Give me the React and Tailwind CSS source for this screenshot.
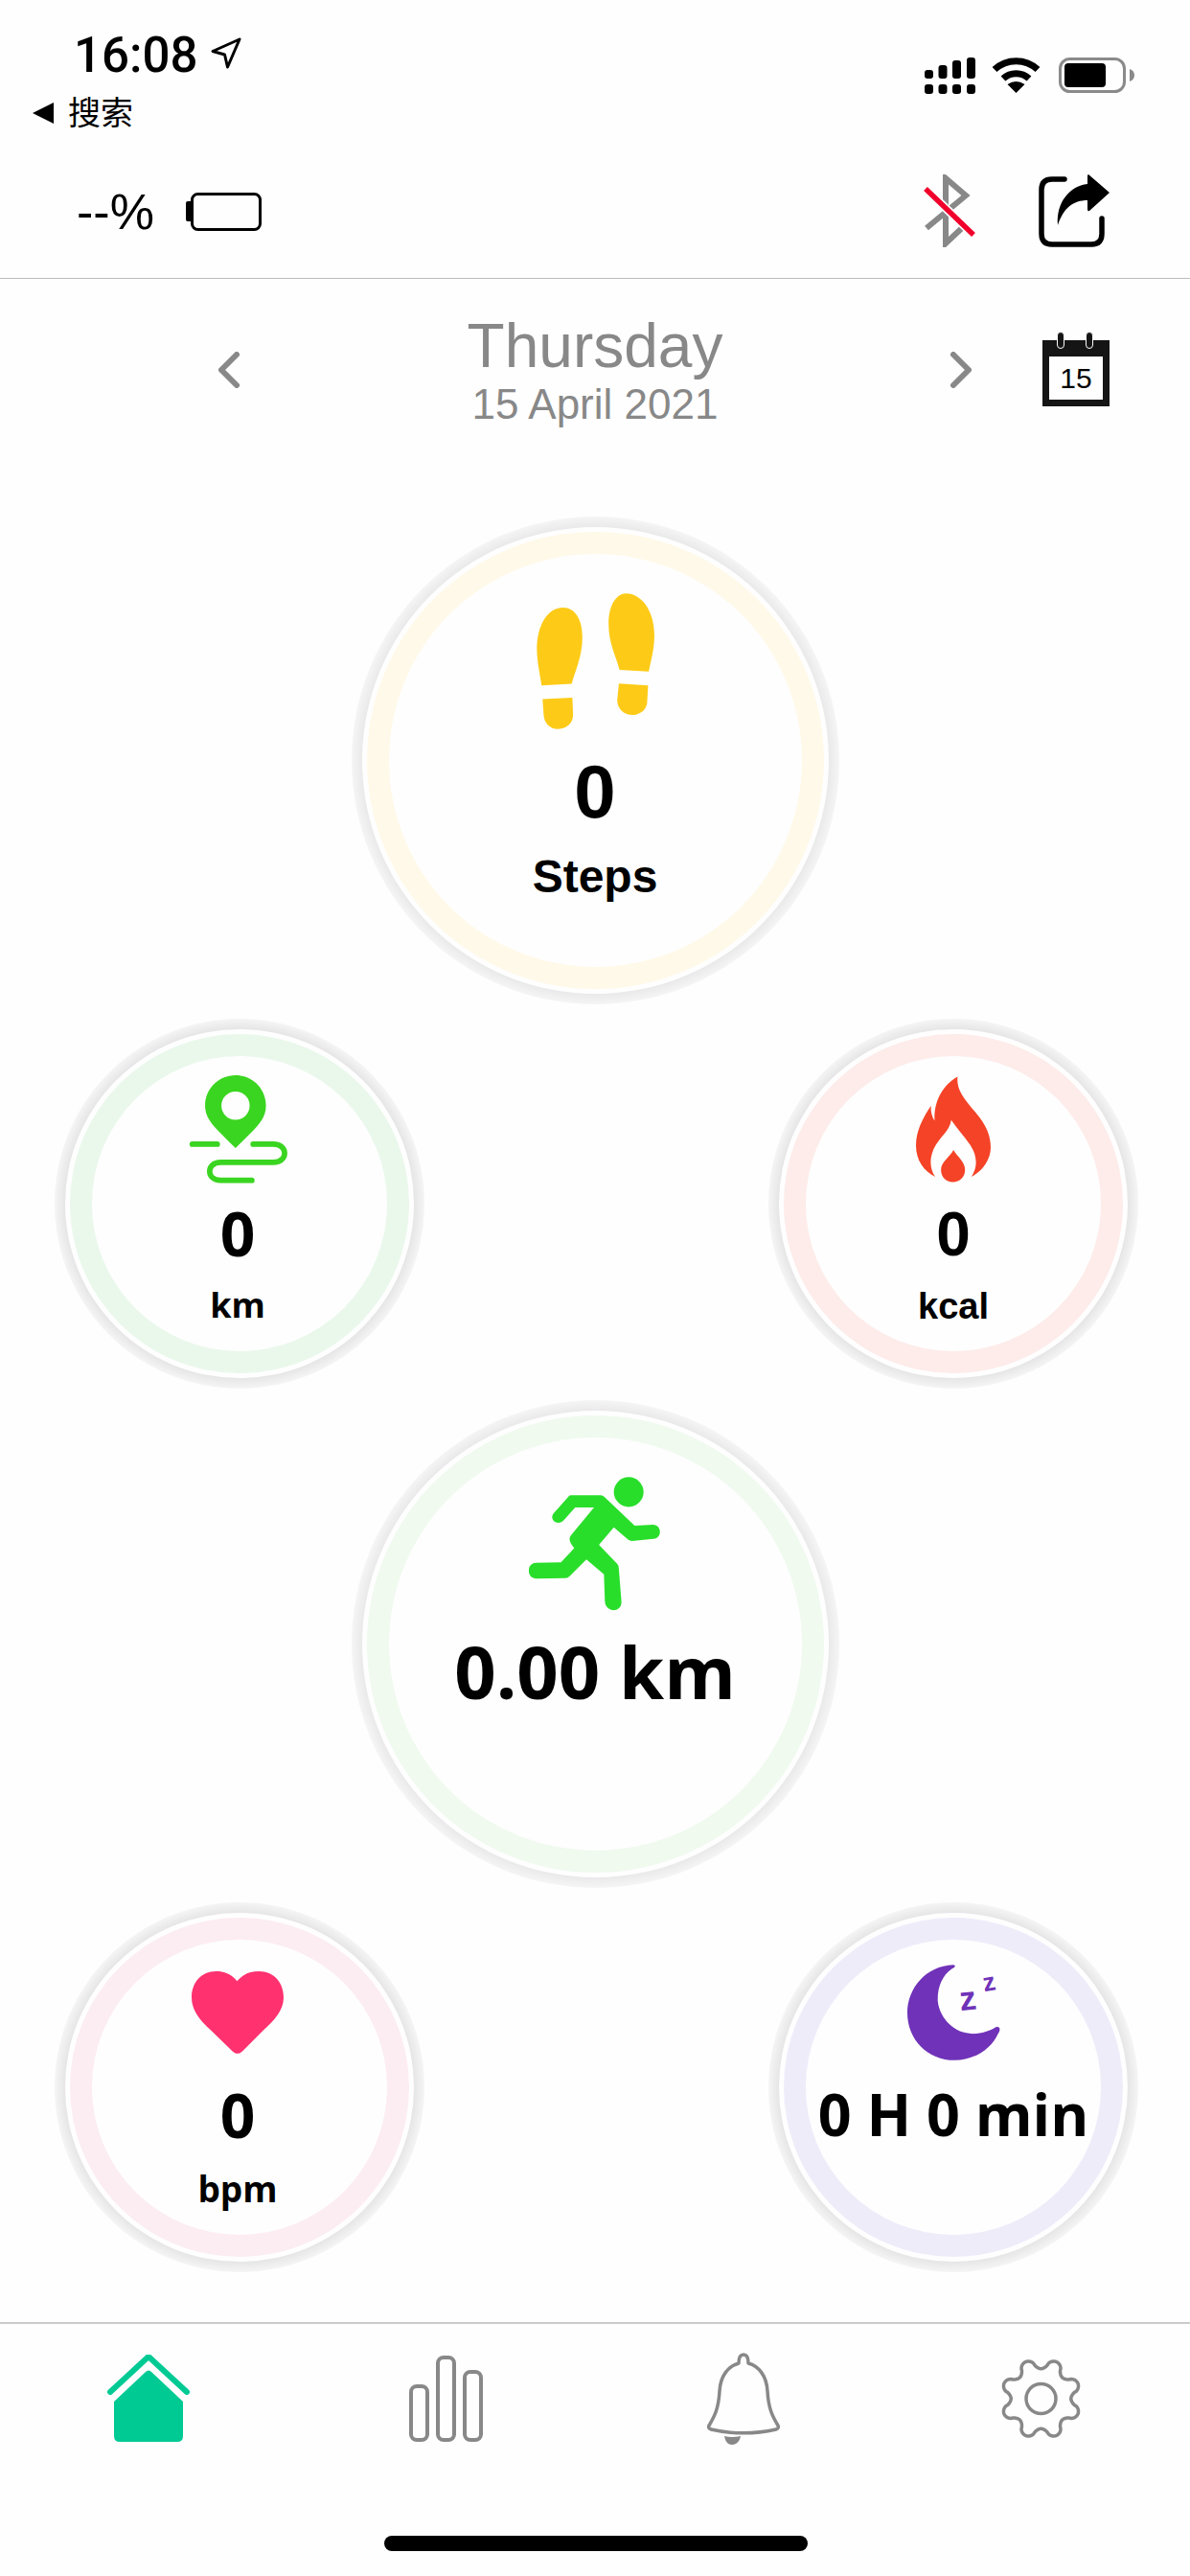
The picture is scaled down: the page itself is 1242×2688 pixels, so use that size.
import React from "react";

const gearPath = (() => {
  const pts = [];
  for (let i = 0; i < 240; i++) {
    const t = (i / 240) * Math.PI * 2;
    const c = Math.cos(8 * (t - Math.PI / 8));
    const s = Math.sign(c) * Math.pow(Math.abs(c), 0.65);
    const r = 36.5 + 5.2 * s;
    pts.push(`${(42.5 + r * Math.cos(t)).toFixed(2)} ${(43 + r * Math.sin(t)).toFixed(2)}`);
  }
  return "M" + pts.join("L") + "Z";
})();

function Ring({ big, ring, children, inner = "" }) {
  return (
    <div
      className={`rounded-full bg-[radial-gradient(closest-side,#e5e5e6_94%,#f5f5f6_100%)] p-[11px] ${big ? "h-[509px] w-[509px]" : "h-[386px] w-[386px]"}`}
    >
      <div className="h-full w-full rounded-full bg-[#fefefe] p-[5px]">
        <div className={`h-full w-full rounded-full p-[23px] ${ring}`}>
          <div className={`flex h-full w-full flex-col items-center rounded-full bg-[#fefefe] ${inner}`}>{children}</div>
        </div>
      </div>
    </div>
  );
}

const Feet = () => (
  <svg width="123" height="142" viewBox="610 288 355 410" fill="#fdcb17" className="mt-[41px]">
    <path d="M690 331C640 331 610 390 611 460C612 500 620 530 625 566L716 561C725 525 748 480 748 420C748 365 725 331 690 331Z" />
    <path d="M628 607L718 603L720 655C720 680 700 697 675 697C650 697 632 680 631 650Z" />
    <path d="M880 289C925 289 965 340 965 415C965 455 955 490 948 524L860 519C850 480 827 440 827 380C827 325 850 289 880 289Z" />
    <path d="M858 560L946 566L943 620C940 640 920 655 898 655C872 655 853 635 853 610Z" />
  </svg>
);

const Pin = () => (
  <svg width="103" height="113" viewBox="472 210 306 338" className="mt-[20px]">
    <path fill="#3ad520" fillRule="evenodd" d="M617 210C670 210 712 252 712 305C712 350 680 375 617 437C555 375 522 350 522 305C522 252 564 210 617 210ZM617 261A44 44 0 1 0 617 349A44 44 0 1 0 617 261Z" />
    <path fill="none" stroke="#3ad520" strokeWidth="17" strokeLinecap="round" d="M482 425H560M672 425H735C782 425 782 482 735 482H570C525 482 525 538 570 538H668" />
  </svg>
);

const Flame = () => (
  <svg width="78" height="111" viewBox="495 215 233 328" fill="#f54327" className="mt-[21px]">
    <path d="M625 215C620 250 640 280 680 325C715 365 728 400 728 435C728 475 700 510 668 527C680 505 685 490 680 465C675 430 640 400 605 350C600 385 570 400 550 440C535 475 540 505 555 527C520 510 495 475 495 430C495 385 515 345 542 305C540 325 545 340 553 352C550 290 580 240 625 215Z" />
    <path d="M612 443C625 465 648 480 648 505C648 528 630 543 610 543C590 543 573 528 573 505C573 480 598 468 612 443Z" />
  </svg>
);

const Runner = () => (
  <svg width="138" height="140" viewBox="588 262 400 406" className="mt-[41px]">
    <circle cx="890" cy="308" r="45" fill="#28de2a" />
    <path
      fill="#28de2a"
      d="M715 318H805Q812 318 818 324L908 410L962 407C990 405 993 448 965 450L900 456Q893 456 888 452L845 415L800 468L855 525Q860 530 860 538L868 640C869 674 820 674 818 640L815 557L762 512L712 562Q706 569 698 569L610 570C580 570 580 522 610 522L685 521L725 478L716 465Q706 450 716 438L785 355H728L695 392C675 415 645 390 665 370L705 325Q710 318 715 318Z"
    />
  </svg>
);

const Heart = () => (
  <svg width="96" height="86" viewBox="485 255 283 253" fill="#ff316f" className="mt-[33px]">
    <path d="M625 285C605 262 585 255 560 255C515 255 485 290 485 335C485 375 510 405 545 437L610 500C620 510 632 510 642 500L705 437C740 405 768 375 768 335C768 290 738 255 692 255C665 255 645 262 625 285Z" />
  </svg>
);

const Moon = () => (
  <svg width="97" height="100" viewBox="468 232 287 295" className="mt-[26px]">
    <path fill="#6f32b8" d="M610 232C620 235 615 240 605 245C575 265 560 305 562 345C568 400 615 445 670 445C695 445 725 435 740 425C755 420 757 432 748 445C725 495 670 527 615 527C530 527 468 462 468 380C468 305 525 235 610 232Z" />
    <text x="629" y="372" fontSize="104" fontWeight="700" fill="#6f32b8" fontFamily="Liberation Sans, sans-serif" transform="rotate(-6 655 345)">z</text>
    <text x="702" y="312" fontSize="78" fontWeight="700" fill="#6f32b8" fontFamily="Liberation Sans, sans-serif" transform="rotate(-10 724 292)">z</text>
  </svg>
);

export default function App() {
  return (
    <div className="flex h-[2688px] w-[1242px] flex-col overflow-hidden bg-[#fefefe] font-['Liberation_Sans','Noto_Sans_CJK_SC',sans-serif] text-black">
      {/* status + header */}
      <div className="h-[291px] border-b border-[#bcbcbc]">
        <div className="flex h-[98px] items-start justify-between pr-[58px] pl-[77px] pt-[34px]">
          <div className="flex items-start">
            <span className="font-['Roboto',sans-serif] text-[51px] leading-[48px] font-medium">16:08</span>
            <svg width="34" height="34" viewBox="0 0 34 34" fill="none" stroke="#000" strokeWidth="3" strokeLinejoin="round" className="mt-[5px] ml-[13px]">
              <path d="M31 2L3 14.5L15.5 18L18.5 31Z" />
            </svg>
          </div>
          <div className="flex items-start">
            <svg width="53" height="38" viewBox="0 0 53 38" fill="#000" className="mt-[26px]">
              <rect x="0" y="13" width="9" height="9" rx="3" />
              <rect x="14.5" y="8" width="9" height="14" rx="3" />
              <rect x="29" y="3" width="9" height="19" rx="3" />
              <rect x="44" y="0" width="9" height="22" rx="3" />
              <rect x="0" y="28" width="9" height="10" rx="3" />
              <rect x="14.5" y="28" width="9" height="10" rx="3" />
              <rect x="29" y="28" width="9" height="10" rx="3" />
              <rect x="44" y="28" width="9" height="10" rx="3" />
            </svg>
            <svg width="51" height="38" viewBox="0 0 51 38" className="mt-[25px] ml-[17px]">
              <g fill="none" stroke="#000" strokeWidth="7">
                <path d="M3 13.5A33 33 0 0 1 48 13.5" />
                <path d="M12 23A20 20 0 0 1 39 23" />
              </g>
              <path d="M25.5 38L16.5 29Q25.5 23 34.5 29Z" fill="#000" />
            </svg>
            <svg width="79" height="37" viewBox="0 0 79 37" className="mt-[26px] ml-[19px]">
              <rect x="1.5" y="1.5" width="67" height="34" rx="10" fill="none" stroke="#8a8a8a" strokeWidth="3" />
              <rect x="6" y="6" width="43" height="25" rx="4" fill="#000" />
              <path d="M74 12C77 13 79 15 79 18.5C79 22 77 24 74 25Z" fill="#8a8a8a" />
            </svg>
          </div>
        </div>
        <div className="flex h-[40px] items-center pl-[34px]">
          <svg width="23" height="22" viewBox="0 0 23 22" fill="#000">
            <path d="M0 11L22 0V22Z" />
          </svg>
          <span className="ml-[14px] text-[34px] leading-none">搜索</span>
        </div>
        <div className="flex h-[152px] items-start justify-between pr-[84px] pl-[80px] pt-[44px]">
          <div className="flex items-start pt-[13px]">
            <span className="text-[52px] leading-none">--%</span>
            <svg width="79" height="40" viewBox="0 0 79 40" className="mt-[6px] ml-[33px]">
              <rect x="0" y="9" width="7" height="21" rx="2" fill="#000" />
              <rect x="6.5" y="1.5" width="71" height="37" rx="6" fill="#fefefe" stroke="#000" strokeWidth="3" />
            </svg>
          </div>
          <div className="flex items-start">
            <svg width="56" height="76" viewBox="0 0 56 76">
              <path d="M5 56L46 22L25 4V72L43 55" fill="none" stroke="#888" strokeWidth="6" />
              <path d="M4 15L54 63" stroke="#fefefe" strokeWidth="9" />
              <path d="M4 15L54 63" stroke="#f0002a" strokeWidth="5.5" />
            </svg>
            <svg width="74" height="76" viewBox="0 0 74 76" className="ml-[66px]">
              <path d="M27 5H14Q3 5 3 16V62Q3 73 14 73H55Q66 73 66 62V46" fill="none" stroke="#000" strokeWidth="5.5" strokeLinecap="round" />
              <path d="M52 0L74 19L53 38Q51 39 51 36V27C36 27 26 35 20 53C18 30 32 12 51 10V2Q51 0 52 0Z" fill="#000" />
            </svg>
          </div>
        </div>
      </div>

      {/* date row */}
      <div className="mt-[38px] flex h-[115px] items-start pr-[84px] pl-[228px]">
        <svg width="22" height="38" viewBox="0 0 22 38" fill="none" stroke="#888" strokeWidth="6" strokeLinecap="round" strokeLinejoin="round" className="mt-[38px]">
          <path d="M19 3L3 19L19 35" />
        </svg>
        <div className="flex flex-1 flex-col items-center gap-[7px] text-[#888]">
          <span className="text-[64px] leading-none">Thursday</span>
          <span className="text-[44px] leading-none">15 April 2021</span>
        </div>
        <svg width="22" height="38" viewBox="0 0 22 38" fill="none" stroke="#888" strokeWidth="6" strokeLinecap="round" strokeLinejoin="round" className="mt-[38px]">
          <path d="M3 3L19 19L3 35" />
        </svg>
        <div className="relative mt-[18px] ml-[74px] h-[77px] w-[70px]">
          <div className="absolute inset-x-0 top-[8px] bottom-0 flex items-center justify-center bg-[#151515] pt-[10px]">
            <div className="flex h-[45px] w-[56px] items-center justify-center bg-[#fefefe] text-[30px] leading-none">15</div>
          </div>
          <div className="absolute top-[-1px] left-[15px] h-[18px] w-[8px] rounded-full border border-[#fefefe] bg-[#151515]"></div>
          <div className="absolute top-[-1px] left-[45px] h-[18px] w-[8px] rounded-full border border-[#fefefe] bg-[#151515]"></div>
        </div>
      </div>

      {/* steps */}
      <div className="mt-[95px] flex justify-center">
        <Ring big ring="bg-[#fff9e9]">
          <Feet />
          <span className="mt-[26px] text-[78px] leading-none font-bold">0</span>
          <span className="mt-[26px] text-[48px] leading-none font-bold">Steps</span>
        </Ring>
      </div>

      {/* distance + calories */}
      <div className="mt-[15px] flex justify-between pr-[54px] pl-[57px]">
        <Ring ring="bg-[#eaf8ec]" inner="pr-[4px]">
          <Pin />
          <span className="mt-[20px] font-['Open_Sans',sans-serif] text-[64px] leading-none font-bold">0</span>
          <span className="mt-[25px] font-['Open_Sans',sans-serif] text-[36px] leading-none font-bold">km</span>
        </Ring>
        <Ring ring="bg-[#fdecea]">
          <Flame />
          <span className="mt-[22px] text-[64px] leading-none font-bold">0</span>
          <span className="mt-[24px] text-[38px] leading-none font-bold">kcal</span>
        </Ring>
      </div>

      {/* run */}
      <div className="mt-[12px] flex justify-center">
        <Ring big ring="bg-[#f0faef]">
          <Runner />
          <span className="mt-[25px] font-['Open_Sans',sans-serif] text-[76px] leading-none font-bold">0.00 km</span>
        </Ring>
      </div>

      {/* heart + sleep */}
      <div className="mt-[15px] flex justify-between pr-[54px] pl-[57px]">
        <Ring ring="bg-[#fcedf2]" inner="pr-[4px]">
          <Heart />
          <span className="mt-[32px] font-['Open_Sans',sans-serif] text-[64px] leading-none font-bold">0</span>
          <span className="mt-[26px] font-['Open_Sans',sans-serif] text-[37px] leading-none font-bold">bpm</span>
        </Ring>
        <Ring ring="bg-[#efecfa]">
          <Moon />
          <span className="mt-[25px] font-['Open_Sans',sans-serif] text-[61px] leading-none font-bold whitespace-nowrap">0 H 0 min</span>
        </Ring>
      </div>

      {/* tab bar */}
      <div className="mt-[52px] grid h-[158px] grid-cols-4 items-center justify-items-center border-t-2 border-[#cbcbcb]">
        <svg width="86" height="92" viewBox="0 0 86 92">
          <path d="M3 39L43 2L83 39" fill="none" stroke="#00ca94" strokeWidth="6" strokeLinecap="round" strokeLinejoin="round" />
          <path d="M40 18Q43 15 46 18L79 49V85Q79 91 73 91H13Q7 91 7 85V49Z" fill="#00ca94" />
        </svg>
        <svg width="77" height="90" viewBox="0 0 77 90" fill="none" stroke="#888" strokeWidth="4">
          <rect x="2" y="32" width="17" height="56" rx="6" />
          <rect x="30" y="2" width="17" height="86" rx="6" />
          <rect x="58" y="17" width="17" height="71" rx="6" />
        </svg>
        <svg width="76" height="96" viewBox="0 0 76 96">
          <path d="M33 11C33 3 36 2 38 2C40 2 43 3 43 11C54 14 62 24 63 40C64 58 68 66 74 76C75 78 74 79 72 80C50 85 26 85 4 80C2 79 1 78 2 76C8 66 12 58 13 40C14 24 22 14 33 11Z" fill="none" stroke="#888" strokeWidth="3.5" strokeLinejoin="round" />
          <path d="M18 87Q26 89 35 87C34 93 30 96 26 96C22 96 19 93 18 87Z" fill="#888" />
        </svg>
        <svg width="85" height="86" viewBox="0 0 85 86" fill="none" stroke="#888" strokeWidth="3.5" strokeLinejoin="round">
          <path d={gearPath} />
          <circle cx="42.5" cy="43" r="15.5" />
        </svg>
      </div>

      {/* home indicator */}
      <div className="mt-[65px] flex justify-center pl-[2px]">
        <div className="h-[16px] w-[442px] rounded-full bg-black"></div>
      </div>
    </div>
  );
}
